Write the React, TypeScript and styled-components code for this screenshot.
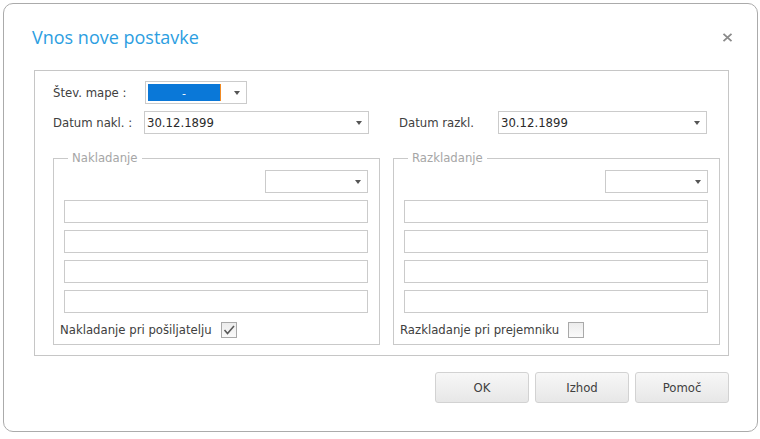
import React from "react";
import styled, { createGlobalStyle } from "styled-components";

const GlobalStyle = createGlobalStyle`
    html, body {
        margin: 0;
        padding: 0;
        background: #fff;
    }
    body {
        font-family: "DejaVu Sans", Tahoma, sans-serif;
        font-size: 11.7px;
        color: #3c3c3c;
    }
`;

const Dialog = styled.div`
    box-sizing: border-box;
    margin: 3px 0 0 3px;
    width: 755px;
    height: 429px;
    border: 1px solid #ababab;
    border-radius: 10px;
    padding: 0 28px 0 30px;
    display: flex;
    flex-direction: column;
`;

const Header = styled.div`
    height: 66px;
    display: flex;
    align-items: center;
    justify-content: space-between;
`;

const Title = styled.h1`
    margin: 0 0 0 -2px;
    font-family: "Open Sans", sans-serif;
    font-weight: 400;
    font-size: 18px;
    color: #2c9ee1;
`;

const CloseButton = styled.div`
    width: 11px;
    height: 9px;
    margin-right: -4px;
    display: flex;
`;

const Panel = styled.div`
    box-sizing: border-box;
    height: 286px;
    border: 1px solid #c6c6c6;
    padding: 10px 8px 0 18px;
    display: flex;
    flex-direction: column;
`;

const Row = styled.div<{ $top?: number }>`
    display: flex;
    align-items: center;
    height: 23px;
    margin-top: ${(p) => p.$top ?? 0}px;
`;

const Label = styled.span<{ $width: number; $left?: number }>`
    width: ${(p) => p.$width}px;
    margin-left: ${(p) => p.$left ?? 0}px;
    flex-shrink: 0;
    white-space: nowrap;
    color: #404040;
`;

const Combo = styled.div<{ $width: number }>`
    box-sizing: border-box;
    width: ${(p) => p.$width}px;
    height: 23px;
    border: 1px solid #cbcbcb;
    background: #fff;
    display: flex;
    align-items: center;
    padding: 0 6px 0 2px;
    flex-shrink: 0;
`;

const ComboText = styled.span`
    flex: 1;
    color: #2a2a2a;
    white-space: nowrap;
`;

const Selection = styled.span`
    width: 72px;
    height: 17px;
    background: #0a78d8;
    border-right: 1px solid #f08a24;
    color: #fff;
    display: flex;
    align-items: flex-end;
    justify-content: center;
    margin-right: auto;
    font-size: 11px;
    line-height: 14px;
`;

const Arrow = styled.span`
    width: 0;
    height: 0;
    border-left: 3.5px solid transparent;
    border-right: 3.5px solid transparent;
    border-top: 4px solid #555;
    margin-left: auto;
`;

const Groups = styled.div`
    display: flex;
    gap: 13px;
    margin-top: 17px;
`;

const Group = styled.fieldset`
    box-sizing: border-box;
    width: 327px;
    height: 194px;
    margin: 0;
    padding: 0 11px 0 10px;
    border: 1px solid #c9c9c9;
    min-width: 0;
`;

const Legend = styled.legend`
    margin-left: 4px;
    padding: 0 4px;
    color: #a6a6a6;
    line-height: 14px;
`;

const GroupBody = styled.div`
    display: flex;
    flex-direction: column;
    padding-top: 5px;
`;

const SmallCombo = styled(Combo)`
    align-self: flex-end;
`;

const TextInput = styled.div`
    box-sizing: border-box;
    height: 23px;
    margin-top: 7px;
    border: 1px solid #cbcbcb;
    background: #fff;
`;

const CheckRow = styled.label`
    display: flex;
    align-items: center;
    gap: 9px;
    height: 16px;
    margin: 9px 0 0 -4px;
    color: #404040;
    white-space: nowrap;
`;

const CheckBox = styled.span`
    box-sizing: border-box;
    width: 16px;
    height: 16px;
    border: 1px solid #a9a9a9;
    background: linear-gradient(#ececec, #fafafa);
    display: flex;
    align-items: center;
    justify-content: center;
`;

const Buttons = styled.div`
    display: flex;
    justify-content: flex-end;
    gap: 6px;
    margin-top: 16px;
`;

const Button = styled.button`
    box-sizing: border-box;
    width: 94px;
    height: 31px;
    border: 1px solid #d2d2d2;
    border-radius: 3px;
    background: linear-gradient(#f7f7f7, #e7e7e7);
    font-family: "DejaVu Sans", Tahoma, sans-serif;
    font-size: 11.7px;
    color: #404040;
    padding: 0;
`;

const Check = () => (
    <svg width="12" height="10" viewBox="0 0 12 10">
        <polyline points="1.5,5 4.5,8.5 11,1" fill="none" stroke="#5a5a5a" strokeWidth="1.6" />
    </svg>
);

const DropCombo = ({ width, value }: { width: number; value?: string }) => (
    <Combo $width={width}>
        {value && <ComboText>{value}</ComboText>}
        <Arrow />
    </Combo>
);

const AddressGroup = ({ title, check, checked }: { title: string; check: string; checked?: boolean }) => (
    <Group>
        <Legend>{title}</Legend>
        <GroupBody>
            <SmallCombo $width={103}>
                <Arrow />
            </SmallCombo>
            <TextInput />
            <TextInput />
            <TextInput />
            <TextInput />
            <CheckRow>
                {check}
                <CheckBox>{checked && <Check />}</CheckBox>
            </CheckRow>
        </GroupBody>
    </Group>
);

const App = () => {
    return (
        <>
            <GlobalStyle />
            <Dialog>
                <Header>
                    <Title>Vnos nove postavke</Title>
                    <CloseButton>
                        <svg width="11" height="9" viewBox="0 0 11 9">
                            <path d="M1.5 0.8 L9.5 8.2 M9.5 0.8 L1.5 8.2" stroke="#8a8a8a" strokeWidth="1.8" />
                        </svg>
                    </CloseButton>
                </Header>
                <Panel>
                    <Row>
                        <Label $width={92}>Štev. mape :</Label>
                        <Combo $width={102}>
                            <Selection>-</Selection>
                            <Arrow />
                        </Combo>
                    </Row>
                    <Row $top={7}>
                        <Label $width={91}>Datum nakl. :</Label>
                        <DropCombo width={225} value="30.12.1899" />
                        <Label $width={99} $left={30}>Datum razkl.</Label>
                        <DropCombo width={209} value="30.12.1899" />
                    </Row>
                    <Groups>
                        <AddressGroup title="Nakladanje" check="Nakladanje pri pošiljatelju" checked />
                        <AddressGroup title="Razkladanje" check="Razkladanje pri prejemniku" />
                    </Groups>
                </Panel>
                <Buttons>
                    <Button>OK</Button>
                    <Button>Izhod</Button>
                    <Button>Pomoč</Button>
                </Buttons>
            </Dialog>
        </>
    );
};

export default App;
